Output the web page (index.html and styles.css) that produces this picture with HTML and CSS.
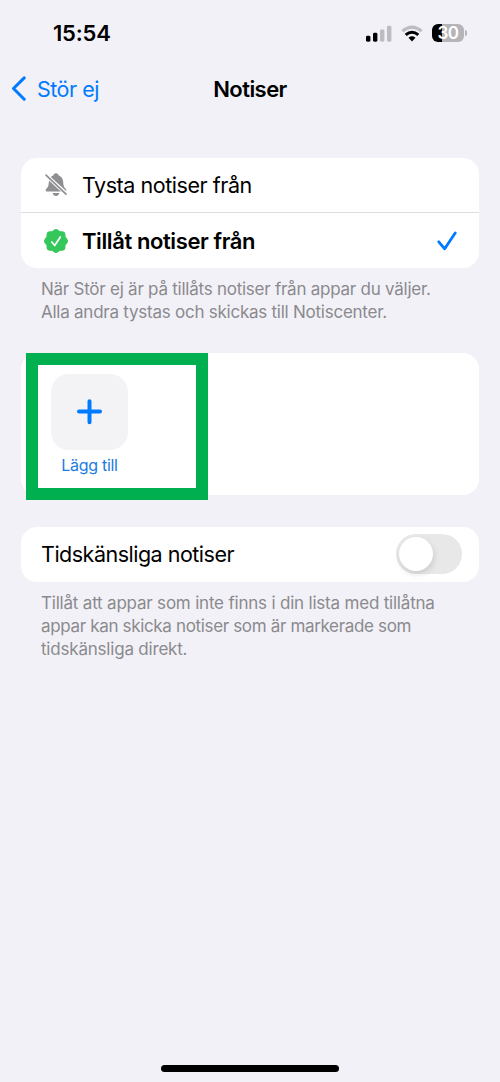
FILE: index.html
```html
<!DOCTYPE html>
<html lang="sv">
<head>
<meta charset="utf-8">
<title>Notiser</title>
<link rel="stylesheet" href="styles.css">
</head>
<body>
<div class="screen">
  <header class="status">
    <span class="clock">15:54</span>
    <div class="indicators">
      <svg class="signal" width="26" height="17" viewBox="0 0 26 17">
        <rect x="0" y="10.800" width="4.400" height="5.900" rx="1.400"/>
        <rect x="7" y="7.800" width="4.400" height="8.900" rx="1.400"/>
        <g fill="#bdbcc1"><rect x="14" y="4.500" width="4.400" height="12.200" rx="1.400"/><rect x="21" y="0.800" width="4.400" height="15.900" rx="1.400"/></g>
      </svg>
      <svg class="wifi" width="22" height="17" viewBox="0 0 22 17" fill="none" stroke-width="3">
        <path d="M1.300 6.200Q11 -2 20.700 6.200" stroke="#bdbcc1"/>
        <path d="M4.700 9.900Q11 4.600 17.300 9.900" stroke="#000"/>
        <path d="M7.500 12.800Q11 9.900 14.500 12.800L11 16.400Z" fill="#000"/>
      </svg>
      <div class="battery"><span>30</span></div>
    </div>
  </header>

  <nav class="nav">
    <a class="back">
      <svg width="16" height="26" viewBox="0 0 16 26" fill="none" stroke="#007aff" stroke-width="3" stroke-linecap="round" stroke-linejoin="round"><path d="M14.200 1.900L3.500 12.500L14.200 23.300"/></svg>
      <span>Stör ej</span>
    </a>
    <h1>Notiser</h1>
  </nav>

  <section class="card choices">
    <div class="row">
      <svg class="row-icon" width="24" height="24" viewBox="0 0 24 24">
        <g fill="#8e8e93">
          <path d="M12 .3C10.400.3 9.500 1.300 9.300 2.500C6.300 3.500 5 6 4.800 9.200C4.600 13.300 3.700 14.300 2.300 15.800C1.200 17 1.500 18.600 3 18.600H21C22.500 18.600 22.800 17 21.700 15.800C20.300 14.300 19.400 13.300 19.200 9.200C19 6 17.700 3.500 14.700 2.500C14.500 1.300 13.600.3 12 .3Z"/>
          <path d="M8.700 20H15.300C15.100 21.800 13.800 22.900 12 22.900C10.200 22.900 8.900 21.800 8.700 20Z"/>
        </g>
        <path d="M1 1.300L23 21.500" stroke="#fff" stroke-width="3.800"/>
        <path d="M2 2.100L22 21.100" stroke="#8e8e93" stroke-width="1.700" stroke-linecap="round"/>
      </svg>
      <span class="mute">Tysta notiser från</span>
    </div>
    <div class="row selected">
      <svg class="row-icon" width="24" height="24" viewBox="-12 -12 24 24">
        <path d="M-2.300-11.100Q0-12.900 2.300-11.100L3.900-9.700L6-9.800Q9.200-9.700 9.400-6.500L9.500-4.200L11.100-2.300Q12.900 0 11.100 2.300L9.500 4.200L9.400 6.500Q9.200 9.700 6 9.800L3.900 9.700L2.300 11.100Q0 12.900-2.300 11.100L-3.900 9.700L-6 9.800Q-9.200 9.700-9.400 6.500L-9.500 4.200L-11.100 2.300Q-12.900 0-11.100-2.300L-9.500-4.200L-9.400-6.500Q-9.200-9.700-6-9.800L-3.900-9.700Z" fill="#34c759"/>
        <path d="M-4.200 1L-1.300 4.500L4.300-4" fill="none" stroke="#fff" stroke-width="1.700" stroke-linecap="round" stroke-linejoin="round"/>
      </svg>
      <span class="allow">Tillåt notiser från</span>
      <svg class="tick" width="20" height="20" viewBox="0 0 20 20" fill="none" stroke="#007aff" stroke-width="2.800" stroke-linecap="round" stroke-linejoin="round"><path d="M1.800 10.800L7.700 17.800L18.200 2"/></svg>
    </div>
  </section>
  <p class="note"><span class="n1">När Stör ej är på tillåts notiser från appar du väljer.</span><br><span class="n1">Alla andra tystas och skickas till Notiscenter.</span></p>

  <section class="card apps">
    <div class="add">
      <div class="add-tile">
        <svg width="26" height="26" viewBox="0 0 26 26" stroke="#007aff" stroke-width="4" stroke-linecap="round"><path d="M12.500 2.200V23.200M2 12.500H23"/></svg>
      </div>
      <span class="add-label">Lägg till</span>
    </div>
    <div class="highlight"></div>
  </section>

  <section class="card toggle-row">
    <span class="toggle-label">Tidskänsliga notiser</span>
    <div class="switch"><div class="knob"></div></div>
  </section>
  <p class="note"><span class="n3">Tillåt att appar som inte finns i din lista med tillåtna</span><br><span class="n4">appar kan skicka notiser som är markerade som</span><br><span class="n3">tidskänsliga direkt.</span></p>

  <div class="home-bar"></div>
</div>
</body>
</html>
```
FILE: styles.css
```css
* { box-sizing: border-box; }
body {
  margin: 0;
  background: #f2f1f7;
  color: #000;
  font-family: Inter, "Liberation Sans", sans-serif;
}
.screen {
  height: 1082px;
  display: flex;
  flex-direction: column;
  padding: 0 21px;
  overflow: hidden;
}
.screen span { white-space: nowrap; }
svg { flex: none; display: block; }

.status {
  height: 66px;
  display: flex;
  justify-content: space-between;
  align-items: center;
  padding: 0 15px 0 32px;
}
.clock { font-size: 22px; font-weight: 600; letter-spacing: -0.2px; }
.indicators { display: flex; align-items: center; }
.wifi { margin: 0 9px; }
.battery {
  position: relative;
  width: 32px;
  height: 18px;
  border-radius: 6px;
  background: linear-gradient(90deg, #000 10px, #b5b4b9 10px);
  color: #fff;
  font-size: 17px;
  font-weight: 600;
  line-height: 18px;
  text-align: center;
  letter-spacing: -0.5px;
}
.battery::after {
  content: "";
  position: absolute;
  left: 33px;
  top: 6px;
  width: 2px;
  height: 6px;
  border-radius: 0 2px 2px 0;
  background: #b5b4b9;
}

.nav {
  height: 45px;
  display: grid;
  grid-template-columns: 1fr auto 1fr;
  align-items: center;
}
.back { display: flex; align-items: center; margin-left: -11px; gap: 11px; color: #007aff; font-size: 21.5px; letter-spacing: -0.5px; }
h1 { margin: 0; font-size: 22px; font-weight: 600; letter-spacing: -0.55px; }

.card { background: #fff; border-radius: 16px; flex: none; }
.choices { margin-top: 47px; height: 110px; }
.row { height: 54px; display: flex; align-items: center; padding: 0 22px 0 23px; font-size: 22px; }
.row + .row { height: 56px; border-top: 1px solid #dddde0; }
.row-icon { margin-right: 14px; }
.mute { font-size: 21.5px; letter-spacing: -0.45px; }
.allow { font-weight: 600; letter-spacing: -0.4px; }
.tick { margin-left: auto; }

.note { margin: 10px 20px 0; font-size: 17px; line-height: 23px; color: #8a8a8e; }
.n1 { letter-spacing: -0.245px; }
.n3 { letter-spacing: -0.2px; }
.n4 { letter-spacing: -0.34px; }

.apps { position: relative; margin-top: 29px; height: 142px; padding: 21px 30px; }
.add { width: 77px; display: flex; flex-direction: column; align-items: center; }
.add-tile { width: 77px; height: 76px; border-radius: 18px; background: #f3f3f5; display: grid; place-items: center; }
.add-label { margin-top: 5px; font-size: 16px; line-height: 20px; letter-spacing: -0.3px; color: #1a7ce0; }
.highlight { position: absolute; left: 5px; top: 0; width: 182px; height: 147px; border: 12px solid #00b050; }

.toggle-row { margin-top: 32px; height: 55px; display: flex; align-items: center; justify-content: space-between; padding: 0 17px 1px 20px; }
.toggle-label { font-size: 21.5px; letter-spacing: -0.5px; }
.switch { width: 66px; height: 40px; padding: 3px; border-radius: 20px; background: #e8e8e9; }
.knob { width: 34px; height: 34px; border-radius: 50%; background: #fff; box-shadow: 1px 3px 6px rgba(0,0,0,.13); }

.home-bar { width: 178px; height: 7px; border-radius: 4px; background: #000; margin: auto auto 10px; flex: none; }
```
